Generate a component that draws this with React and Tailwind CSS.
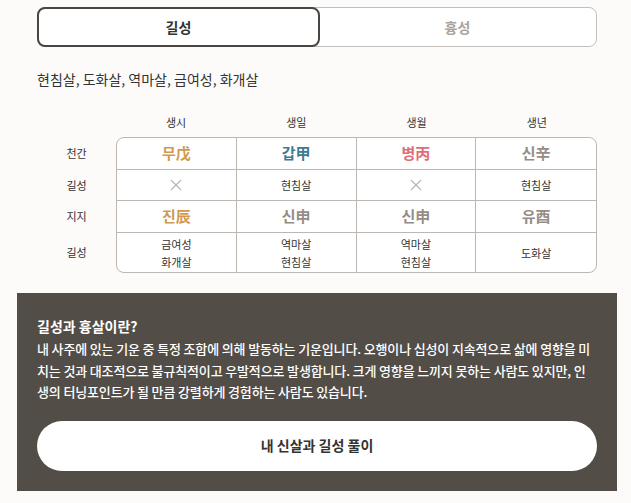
import React from "react";

const font = "font-['Noto_Sans_CJK_KR','Noto_Sans',sans-serif]";

const columns = ["생시", "생일", "생월", "생년"];

const rows = [
  {
    label: "천간",
    height: "h-[31px]",
    cells: [
      { text: "무戊", color: "text-[#d19a4f]", big: true },
      { text: "갑甲", color: "text-[#3d7b8f]", big: true },
      { text: "병丙", color: "text-[#e06c76]", big: true },
      { text: "신辛", color: "text-[#958d86]", big: true },
    ],
  },
  {
    label: "길성",
    height: "h-[30px]",
    cells: [{ none: true }, { lines: ["현침살"] }, { none: true }, { lines: ["현침살"] }],
  },
  {
    label: "지지",
    height: "h-[31px]",
    cells: [
      { text: "진辰", color: "text-[#d19a4f]", big: true },
      { text: "신申", color: "text-[#958d86]", big: true },
      { text: "신申", color: "text-[#958d86]", big: true },
      { text: "유酉", color: "text-[#958d86]", big: true },
    ],
  },
  {
    label: "길성",
    height: "h-[39px]",
    cells: [
      { lines: ["금여성", "화개살"] },
      { lines: ["역마살", "현침살"] },
      { lines: ["역마살", "현침살"] },
      { lines: ["도화살"] },
    ],
  },
];

const Cell = ({ cell }) => {
  if (cell.none) {
    return (
      <svg width="12" height="12" viewBox="0 0 12 12">
        <path d="M1 1L11 11M11 1L1 11" stroke="#b9b3ad" strokeWidth="1.1" />
      </svg>
    );
  }
  if (cell.big) {
    return <span className={`text-[15px] font-bold ${cell.color}`}>{cell.text}</span>;
  }
  return (
    <div className="flex flex-col items-center text-[11px] leading-[18px] text-[#333]">
      {cell.lines.map((l, i) => (
        <span key={i}>{l}</span>
      ))}
    </div>
  );
};

export default function App() {
  const [tab, setTab] = React.useState("good");

  return (
    <div className={`min-h-[503px] bg-[#fcfbfa] ${font}`}>
      <div className="ml-[17px] w-[600px] pt-[7px]">
        <div className="px-5">
          <div className="flex h-[40px] rounded-lg border border-[#c4bfba] bg-white">
            <button
              onClick={() => setTab("good")}
              className={`-m-px flex flex-1 items-center justify-center rounded-lg text-[14px] font-bold ${
                tab === "good" ? "border-2 border-[#4a4541] text-[#333]" : "text-[#aaa4a0]"
              }`}
            >
              길성
            </button>
            <button
              onClick={() => setTab("bad")}
              className={`-m-px flex flex-1 items-center justify-center rounded-lg text-[14px] font-bold ${
                tab === "bad" ? "border-2 border-[#4a4541] text-[#333]" : "text-[#aaa4a0]"
              }`}
            >
              흉성
            </button>
          </div>

          <p className="mt-[22px] text-[14px] leading-[20px] text-[#333]">
            현침살, 도화살, 역마살, 금여성, 화개살
          </p>

          <div className="mt-[25px] grid grid-cols-[79px_repeat(4,1fr)] text-[11px] text-[#333]">
            <div />
            {columns.map((c) => (
              <div key={c} className="text-center leading-[16px]">
                {c}
              </div>
            ))}
          </div>

          <div className="mt-[7px] flex">
            <div className="flex w-[79px] flex-col pt-px">
              {rows.map((r, i) => (
                <div
                  key={i}
                  className={`${r.height} box-content flex items-center justify-center pb-px text-[11px] text-[#333]`}
                >
                  {r.label}
                </div>
              ))}
            </div>
            <div className="grid flex-1 grid-cols-4 overflow-hidden rounded-lg border border-[#bdb7b1] bg-white">
              {rows.map((r, ri) =>
                r.cells.map((cell, ci) => (
                  <div
                    key={`${ri}-${ci}`}
                    className={`${r.height} flex items-center justify-center border-[#bdb7b1] ${
                      ci < 3 ? "border-r" : ""
                    } ${ri < rows.length - 1 ? "box-content border-b" : ""}`}
                  >
                    <Cell cell={cell} />
                  </div>
                ))
              )}
            </div>
          </div>
        </div>

        <div className="mt-[20px] bg-[#534d47] px-5 pb-5 pt-[23px] text-white">
          <h2 className="text-[14px] font-bold leading-[20px]">길성과 흉살이란?</h2>
          <p className="mt-[2px] text-[13px] font-medium leading-[21.5px] tracking-[-0.15px]">
            내 사주에 있는 기운 중 특정 조합에 의해 발동하는 기운입니다. 오행이나 십성이 지속적으로 삶에 영향을 미
            <br />
            치는 것과 대조적으로 불규칙적이고 우발적으로 발생합니다. 크게 영향을 느끼지 못하는 사람도 있지만, 인
            <br />
            생의 터닝포인트가 될 만큼 강렬하게 경험하는 사람도 있습니다.
          </p>
          <button className="mt-[18px] flex h-[50px] w-full items-center justify-center rounded-full bg-white text-[14px] font-bold text-[#333]">
            내 신살과 길성 풀이
          </button>
        </div>
      </div>
    </div>
  );
}
